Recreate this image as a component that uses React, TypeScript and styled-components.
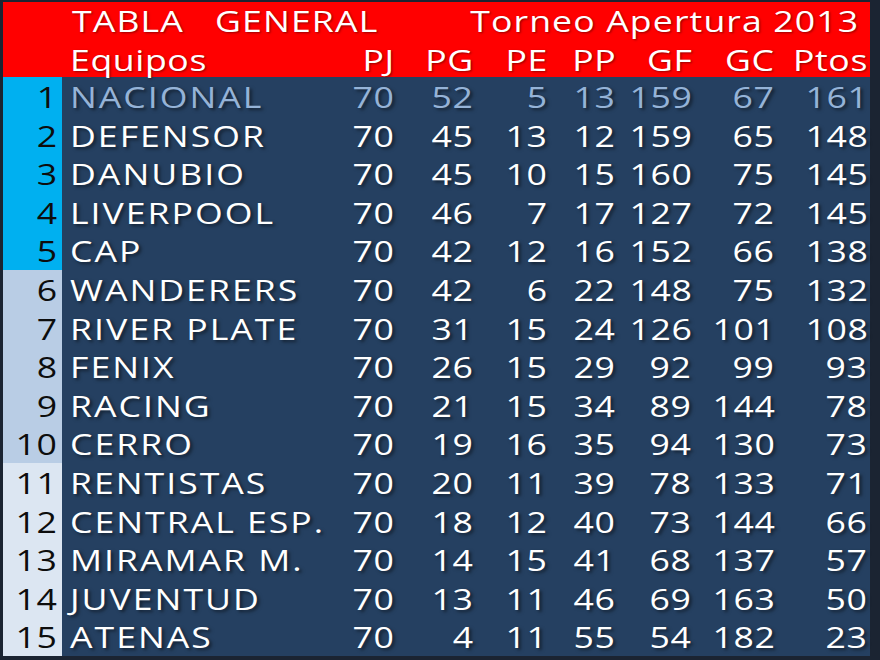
import React from "react";
import styled, {createGlobalStyle} from "styled-components";

const GlobalStyle = createGlobalStyle`
  html, body {
    margin: 0;
    padding: 0;
    background: #1b2432;
  }
  body {
    font-family: "Open Sans", "Liberation Sans", sans-serif;
  }
`;

type Team = {
  name: string;
  pj: number;
  pg: number;
  pe: number;
  pp: number;
  gf: number;
  gc: number;
  pts: number;
};

const teams: Team[] = [
  {name: "NACIONAL", pj: 70, pg: 52, pe: 5, pp: 13, gf: 159, gc: 67, pts: 161},
  {name: "DEFENSOR", pj: 70, pg: 45, pe: 13, pp: 12, gf: 159, gc: 65, pts: 148},
  {name: "DANUBIO", pj: 70, pg: 45, pe: 10, pp: 15, gf: 160, gc: 75, pts: 145},
  {name: "LIVERPOOL", pj: 70, pg: 46, pe: 7, pp: 17, gf: 127, gc: 72, pts: 145},
  {name: "CAP", pj: 70, pg: 42, pe: 12, pp: 16, gf: 152, gc: 66, pts: 138},
  {name: "WANDERERS", pj: 70, pg: 42, pe: 6, pp: 22, gf: 148, gc: 75, pts: 132},
  {name: "RIVER PLATE", pj: 70, pg: 31, pe: 15, pp: 24, gf: 126, gc: 101, pts: 108},
  {name: "FENIX", pj: 70, pg: 26, pe: 15, pp: 29, gf: 92, gc: 99, pts: 93},
  {name: "RACING", pj: 70, pg: 21, pe: 15, pp: 34, gf: 89, gc: 144, pts: 78},
  {name: "CERRO", pj: 70, pg: 19, pe: 16, pp: 35, gf: 94, gc: 130, pts: 73},
  {name: "RENTISTAS", pj: 70, pg: 20, pe: 11, pp: 39, gf: 78, gc: 133, pts: 71},
  {name: "CENTRAL ESP.", pj: 70, pg: 18, pe: 12, pp: 40, gf: 73, gc: 144, pts: 66},
  {name: "MIRAMAR M.", pj: 70, pg: 14, pe: 15, pp: 41, gf: 68, gc: 137, pts: 57},
  {name: "JUVENTUD", pj: 70, pg: 13, pe: 11, pp: 46, gf: 69, gc: 163, pts: 50},
  {name: "ATENAS", pj: 70, pg: 4, pe: 11, pp: 55, gf: 54, gc: 182, pts: 23},
];

const tierColors = ["#00b0f0", "#b9cde5", "#dce6f2"];

const columns = "59px 273px 60px 79px 74px 68px 76px 83px 93px";

export default function App() {
  return (
    <>
      <GlobalStyle />
      <Board>
        <TitleRow>
          <RankCell tier="#ff0000" />
          <TitleBar>
            <Stretch title>{"TABLA   GENERAL"}</Stretch>
            <Stretch title origin="right">Torneo Apertura 2013</Stretch>
          </TitleBar>
        </TitleRow>
        <HeadRow>
          <RankCell tier="#ff0000" />
          <NameCell>
            <Stretch>Equipos</Stretch>
          </NameCell>
          {["PJ", "PG", "PE", "PP", "GF", "GC", "Ptos"].map((h) => (
            <NumCell key={h}>
              <Stretch origin="right">{h}</Stretch>
            </NumCell>
          ))}
        </HeadRow>
        {teams.map((t, i) => (
          <TeamRow key={t.name} leader={i === 0}>
            <RankCell tier={tierColors[Math.floor(i / 5)]}>
              <Stretch origin="right">{i + 1}</Stretch>
            </RankCell>
            <NameCell>
              <Stretch wide>{t.name}</Stretch>
            </NameCell>
            {[t.pj, t.pg, t.pe, t.pp, t.gf, t.gc, t.pts].map((v, k) => (
              <NumCell key={k}>
                <Stretch origin="right">{v}</Stretch>
              </NumCell>
            ))}
          </TeamRow>
        ))}
      </Board>
    </>
  );
}

const Board = styled.div`
  width: 867px;
  margin: 2px 10px 4px 3px;
  display: flex;
  flex-direction: column;
  background: #254061;
  font-size: 28.5px;
  color: #ffffff;
`;

const Stretch = styled.span<{origin?: "left" | "right"; wide?: boolean; title?: boolean}>`
  display: inline-block;
  white-space: pre;
  transform: scaleX(1.25);
  transform-origin: ${(p) => p.origin || "left"} center;
  letter-spacing: ${(p) => (p.title ? "0.9px" : p.wide ? "1.6px" : "0.5px")};
`;

const TitleRow = styled.div`
  display: grid;
  grid-template-columns: 59px 1fr;
  height: 37.5px;
  background: #ff0000;
  align-items: center;
  text-shadow: 1px 1px 2px rgba(80, 0, 0, 0.6);
`;

const TitleBar = styled.div`
  display: flex;
  justify-content: space-between;
  padding: 0 11px 0 10px;
  line-height: 1;
`;

const HeadRow = styled.div`
  display: grid;
  grid-template-columns: ${columns};
  height: 37.5px;
  background: #ff0000;
  align-items: center;
  padding-top: 1px;
  box-sizing: border-box;
  text-shadow: 1px 1px 2px rgba(80, 0, 0, 0.6);
`;

const TeamRow = styled.div<{leader?: boolean}>`
  display: grid;
  grid-template-columns: ${columns};
  height: 38.6px;
  align-items: stretch;
  color: ${(p) => (p.leader ? "#95b3d7" : "#ffffff")};
  text-shadow: 2px 2px 3px rgba(0, 0, 0, 0.5);
`;

const RankCell = styled.div<{tier: string}>`
  height: 100%;
  box-sizing: border-box;
  background: ${(p) => p.tier};
  color: #0d0d0d;
  text-shadow: none;
  display: flex;
  align-items: center;
  justify-content: flex-end;
  padding: 2px 4px 0 0;
  line-height: 1;
`;

const NameCell = styled.div`
  display: flex;
  align-items: center;
  padding: 2px 0 0 8px;
  line-height: 1;
`;

const NumCell = styled.div`
  display: flex;
  align-items: center;
  justify-content: flex-end;
  padding-top: 2px;
  line-height: 1;
`;
